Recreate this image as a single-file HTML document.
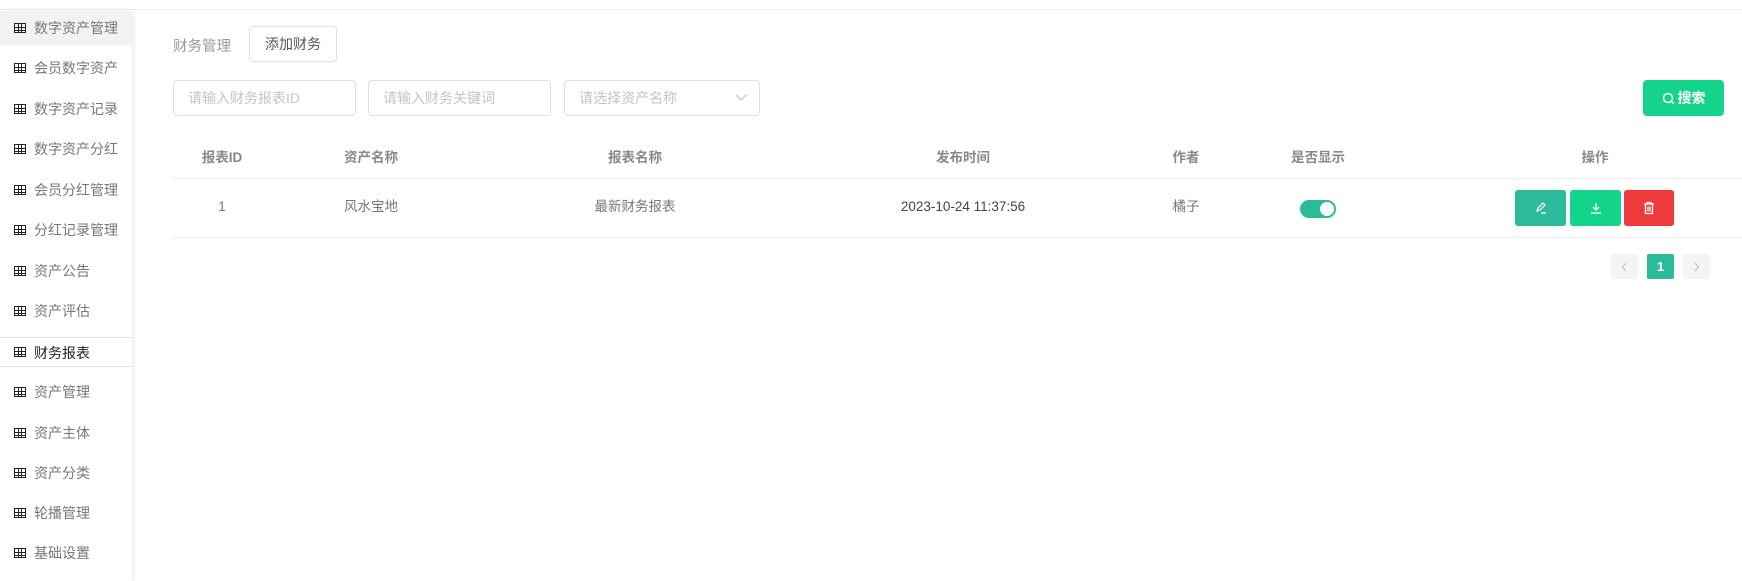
<!DOCTYPE html>
<html><head><meta charset="utf-8"><style>
*{box-sizing:border-box;margin:0;padding:0}
body{width:1742px;height:581px;background:#fff;position:relative;overflow:hidden;font-family:"Liberation Sans","Noto Sans CJK SC",sans-serif;font-size:14px;color:#606266}
.a{position:absolute;white-space:nowrap}
.top{position:absolute;left:0;top:0;width:1742px;height:10px;border-bottom:1px solid #eeeef2}
.side{position:absolute;left:0;top:10px;width:132px;height:571px;background:#fff;box-shadow:2px 0 5px rgba(0,0,0,.08)}
.mi{position:absolute;left:0;width:132px;height:34px;line-height:34px;padding-left:34px;color:#777;font-size:14px}
.mi i{position:absolute;left:14px;top:12px;width:12px;height:10px;border:1.5px solid #222;background:linear-gradient(#222,#222) 0 3px/100% 1px no-repeat,linear-gradient(#222,#222) 0 6px/100% 1px no-repeat,linear-gradient(90deg,#222,#222) 3px 0/1px 100% no-repeat,linear-gradient(90deg,#222,#222) 6px 0/1px 100% no-repeat}
.inp{position:absolute;top:80px;height:36px;border:1px solid #dcdfe6;border-radius:4px;color:#c0c4cc;padding-left:14px;line-height:34px;font-size:14px}
.th{position:absolute;top:146px;font-size:13.5px;color:#888;font-weight:600;transform:translateX(-50%)}
.td{position:absolute;top:197px;height:20px;line-height:20px;font-size:13.5px;color:#777;transform:translateX(-50%)}
.btn{position:absolute;top:190px;height:36px;border-radius:3px}
.pg{position:absolute;top:254px;width:27px;height:25px;border-radius:2px;background:#f4f4f5;color:#c0c4cc;text-align:center;line-height:25px;font-size:13px}
.pg svg{position:absolute;left:10px;top:8px}
</style></head><body>
<div class="top"></div>
<div class="side">
<div class="mi" style="top:1px;background:#f2f2f2"><i></i>数字资产管理</div>
<div class="mi" style="top:41px"><i></i>会员数字资产</div>
<div class="mi" style="top:82px"><i></i>数字资产记录</div>
<div class="mi" style="top:122px"><i></i>数字资产分红</div>
<div class="mi" style="top:163px"><i></i>会员分红管理</div>
<div class="mi" style="top:203px"><i></i>分红记录管理</div>
<div class="mi" style="top:244px"><i></i>资产公告</div>
<div class="mi" style="top:284px"><i></i>资产评估</div>
<div class="mi" style="top:327px;height:30px;line-height:30px;border-top:1px solid #e6e6e6;border-bottom:1px solid #e6e6e6;color:#222"><i style="top:9px"></i>财务报表</div>
<div class="mi" style="top:365px"><i></i>资产管理</div>
<div class="mi" style="top:406px"><i></i>资产主体</div>
<div class="mi" style="top:446px"><i></i>资产分类</div>
<div class="mi" style="top:486px"><i></i>轮播管理</div>
<div class="mi" style="top:526px"><i></i>基础设置</div>
</div>
<div class="a" style="left:173px;top:35px;font-size:14.5px;color:#999">财务管理</div>
<div class="a" style="left:249px;top:26px;width:88px;height:36px;border:1px solid #dcdfe6;border-radius:4px;text-align:center;line-height:34px;color:#555">添加财务</div>
<div class="inp" style="left:173px;width:183px">请输入财务报表ID</div>
<div class="inp" style="left:368px;width:183px">请输入财务关键词</div>
<div class="inp" style="left:564px;width:196px">请选择资产名称<svg style="position:absolute;right:12px;top:13px" width="12" height="8" viewBox="0 0 12 8"><path d="M1 1l5 5 5-5" fill="none" stroke="#c0c4cc" stroke-width="1.3"/></svg></div>
<div class="a" style="left:1643px;top:80px;width:81px;height:36px;background:#13d48a;border-radius:4px;color:#fff;text-align:center;line-height:36px;font-weight:bold"><svg width="13" height="13" viewBox="0 0 13 13" style="vertical-align:-2px;margin-right:3px"><circle cx="6" cy="6" r="4.5" fill="none" stroke="#fff" stroke-width="1.5"/><path d="M9.2 9.2l2.6 2.6" stroke="#fff" stroke-width="1.5"/></svg>搜索</div>
<div class="th" style="left:222px">报表ID</div>
<div class="th" style="left:371px">资产名称</div>
<div class="th" style="left:635px">报表名称</div>
<div class="th" style="left:963px">发布时间</div>
<div class="th" style="left:1186px">作者</div>
<div class="th" style="left:1318px">是否显示</div>
<div class="th" style="left:1595px">操作</div>
<div class="a" style="left:173px;top:178px;width:1569px;height:1px;background:#ebeef5"></div>
<div class="td" style="left:222px">1</div>
<div class="td" style="left:371px">风水宝地</div>
<div class="td" style="left:635px">最新财务报表</div>
<div class="td" style="left:963px;color:#444">2023-10-24 11:37:56</div>
<div class="td" style="left:1186px">橘子</div>
<div class="a" style="left:1300px;top:200px;width:36px;height:18px;border-radius:9px;background:#2bbb9b"><div style="position:absolute;right:2px;top:2px;width:14px;height:14px;border-radius:50%;background:#fff"></div></div>
<div class="btn" style="left:1515px;width:51px;background:#2bbb9b"><svg style="position:absolute;left:19px;top:11px" width="14" height="14" viewBox="0 0 14 14"><path d="M3 10l1-3 5-5 2 2-5 5z" fill="none" stroke="#fff" stroke-width="1.2"/><path d="M7 12h5" stroke="#fff" stroke-width="1.2"/></svg></div>
<div class="btn" style="left:1570px;width:51px;background:#13d48a"><svg style="position:absolute;left:19px;top:11px" width="14" height="14" viewBox="0 0 14 14"><path d="M7 2v7M4 6l3 3 3-3M2 12h10" fill="none" stroke="#fff" stroke-width="1.3"/></svg></div>
<div class="btn" style="left:1624px;width:50px;background:#ee3a3a"><svg style="position:absolute;left:18px;top:11px" width="14" height="14" viewBox="0 0 14 14"><path d="M2 3h10M5 3V1.5h4V3M3.5 3.5v9h7v-9M6 5.5v5M8 5.5v5" fill="none" stroke="#fff" stroke-width="1.3"/></svg></div>
<div class="a" style="left:173px;top:237px;width:1569px;height:1px;background:#ebeef5"></div>
<div class="pg" style="left:1611px"><svg width="7" height="10" viewBox="0 0 7 10"><path d="M5 1L1.5 5 5 9" fill="none" stroke="#c0c4cc" stroke-width="1.3"/></svg></div>
<div class="pg" style="left:1647px;background:#2bbb9b;color:#fff;font-weight:bold">1</div>
<div class="pg" style="left:1683px"><svg width="7" height="10" viewBox="0 0 7 10"><path d="M2 1l3.5 4L2 9" fill="none" stroke="#c0c4cc" stroke-width="1.3"/></svg></div>
</body></html>
